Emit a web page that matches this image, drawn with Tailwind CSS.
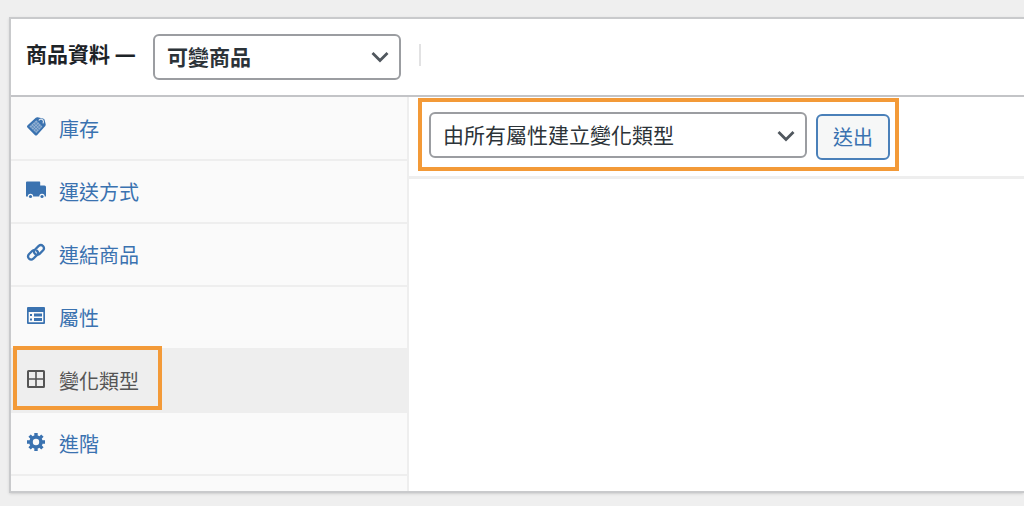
<!DOCTYPE html>
<html lang="zh-Hant">
<head>
    <meta charset="UTF-8">
    <meta name="viewport" content="width=device-width, initial-scale=1.0">
    <script src="https://cdn.jsdelivr.net/npm/@tailwindcss/browser@4"></script>
    <title>商品資料</title>
</head>
<body class="bg-[#efefef] min-h-screen pt-[17px] pl-[9px] overflow-x-hidden font-['Noto_Sans_CJK_TC',sans-serif] text-[#2c3338]">

    <section class="bg-white border-2 border-r-0 border-[#c9cacc] shadow-sm">
        <!-- Product type -->
        <header class="flex items-center h-[78px] pl-[15px] border-b-2 border-[#c3c4c7]">
            <label for="product-type" class="w-[127px] shrink-0 pb-2 text-[21px] leading-6 font-bold text-[#1d2327]">商品資料 <span class="font-['Open_Sans',sans-serif]">—</span></label>
            <div class="relative w-[248px]">
                <select id="product-type" class="appearance-none block w-full h-[46px] pl-3 pr-10 bg-white border-2 border-[#9b9da1] rounded-md text-[21px] font-bold">
                    <option>可變商品</option>
                </select>
                <svg class="absolute right-3 top-[17px] w-[18px] h-3 pointer-events-none" viewBox="0 0 18 12" fill="none" stroke="#50575e" stroke-width="2.8"><path d="M1.5 2 9 9.5 16.5 2"/></svg>
            </div>
            <span class="ml-[18px] w-[2px] h-[22px] -mt-1 bg-[#e2e2e3]"></span>
        </header>

        <div class="flex">
            <!-- Tabs -->
            <nav class="w-[398px] shrink-0 bg-[#fafafa] border-r-2 border-[#eeeeee] pt-px pb-[15px]">
                <ul class="text-xl text-[#3a72b0]">
                    <li>
                        <a href="#inventory" class="flex items-center gap-[13px] h-[63px] pl-[15px] border-b-2 border-[#eeeeee]">
                            <svg class="w-5 h-5 -mt-1" viewBox="0 0 20 20">
                                <path d="M1.600 8.200 9.800.8q.8-.7 1.800-.5l5.400 1.100q1.100.2 1.500 1.200l1.200 4.700q.2.900-.4 1.600L11.200 18q-1.200 1.200-2.400 0L1.400 10.600q-1.100-1.200.2-2.400Z" fill="currentColor"/>
                                <path d="M10.300 3.300 16.400 9.400 10.300 16 3.400 9.500Z" fill="#fafafa" fill-opacity=".45"/>
                                <path d="m8.500 5 6.200 6.300M6.700 6.600l6.200 6.300M5 8.200l6.200 6.300M5.100 11.200l6.900-6.400M7 13l6.800-6.600M8.800 14.600l6.700-6.600" stroke="currentColor" stroke-opacity=".75" stroke-width=".7" fill="none"/>
                                <path d="M12.800 3.600q.8-1.700 2.500-1.500 2.100.4 2.200 2.500 0 1.100-.7 1.800" stroke="#fafafa" stroke-opacity=".85" stroke-width="1.100" fill="none"/>
                            </svg>
                            <span>庫存</span>
                        </a>
                    </li>
                    <li>
                        <a href="#shipping" class="flex items-center gap-[13px] h-[63px] pl-[15px] border-b-2 border-[#eeeeee]">
                            <svg class="w-5 h-5 -mt-1" viewBox="0 0 20 20" fill="currentColor">
                                <path d="M1 1.500h12.500q.7 0 .7.700V5.500h4.300q1.500 0 1.500 1.500V16.500h-1.300a2.700 2.700 0 0 0-5.400 0H7.200a2.700 2.700 0 0 0-5.400 0H0V2.500q0-1 1-1Z"/>
                                <circle cx="4.500" cy="16.500" r="1.600"/>
                                <circle cx="16" cy="16.500" r="1.600"/>
                            </svg>
                            <span>運送方式</span>
                        </a>
                    </li>
                    <li>
                        <a href="#linked" class="flex items-center gap-[13px] h-[63px] pl-[15px] border-b-2 border-[#eeeeee]">
                            <svg class="w-5 h-5 -mt-1" viewBox="0 0 20 20" fill="none" stroke="currentColor" stroke-width="2.300" stroke-linecap="round">
                                <path d="M9.100 10.900q-2.200-2-.2-4.200L12.700 2.900q2.200-1.800 4.300.1 1.900 2.100.1 4.300L13.600 10.800q-.8.700-1.700.7"/>
                                <path d="M10.900 7.700q2.200 2 .2 4.200L7.300 15.700q-2.200 1.800-4.300-.1-1.900-2.100-.1-4.300L6.400 7.800q.8-.7 1.700-.7"/>
                            </svg>
                            <span>連結商品</span>
                        </a>
                    </li>
                    <li>
                        <a href="#attributes" class="flex items-center gap-[13px] h-[63px] pl-[15px] border-b-2 border-[#eeeeee]">
                            <svg class="w-5 h-5 -mt-1" viewBox="0 0 20 20" fill="currentColor">
                                <path fill-rule="evenodd" d="M2 1h16q1 0 1 1v15q0 1-1 1H2q-1 0-1-1V2q0-1 1-1Zm.7 5v10.300h14.600V6Z"/>
                                <path d="M4 8h2v2H4ZM4 12.500h2v2H4ZM8 7.500h8v3H8ZM8 12h8v3H8Z"/>
                            </svg>
                            <span>屬性</span>
                        </a>
                    </li>
                    <li class="relative bg-[#eeeeee] text-[#555555]">
                        <a href="#variations" aria-current="page" class="flex items-center gap-[13px] h-[63px] pl-[15px] border-b-2 border-[#eeeeee]">
                            <svg class="w-5 h-5 -mt-1" viewBox="0 0 20 20" fill="none" stroke="currentColor">
                                <rect x="2" y="2" width="16" height="16" rx=".5" stroke-width="2"/>
                                <path d="M10 2v16M2 10h16" stroke-width="1.600"/>
                            </svg>
                            <span>變化類型</span>
                        </a>
                        <span class="absolute left-[2px] -top-1 w-[149px] h-16 border-4 border-[#f39a38] pointer-events-none"></span>
                    </li>
                    <li>
                        <a href="#advanced" class="flex items-center gap-[13px] h-[63px] pl-[15px] border-b-2 border-[#eeeeee]">
                            <svg class="w-5 h-5 -mt-1" viewBox="0 0 20 20">
                                <circle cx="10" cy="10" r="5" fill="none" stroke="currentColor" stroke-width="3.600"/>
                                <path d="M10 1v3.500M10 15.500V19M1 10h3.500M15.500 10H19M3.600 3.600l2.500 2.500M13.900 13.900l2.500 2.500M3.600 16.400l2.500-2.500M13.900 6.100l2.500-2.500" stroke="currentColor" stroke-width="3.400"/>
                            </svg>
                            <span>進階</span>
                        </a>
                    </li>
                </ul>
            </nav>

            <!-- Variations panel -->
            <main class="flex-1">
                <div class="h-[82px] pl-[9px] pt-px border-b-3 border-[#eeeeee]">
                    <form class="flex items-start gap-[9px] w-[481px] h-[73px] pl-[7px] pr-[5px] pt-[10px] border-4 border-[#f39a38]">
                        <div class="relative flex-1">
                            <select id="bulk-action" aria-label="變化類型操作" class="appearance-none block w-full h-[46px] pl-3 pr-10 bg-white border-2 border-[#9b9da1] rounded-md text-[21px]">
                                <option>由所有屬性建立變化類型</option>
                            </select>
                            <svg class="absolute right-3 top-[18px] w-[18px] h-3 pointer-events-none" viewBox="0 0 18 12" fill="none" stroke="#50575e" stroke-width="2.8"><path d="M1.5 2 9 9.500 16.500 2"/></svg>
                        </div>
                        <button type="button" class="w-[74px] h-[46px] mt-[2px] bg-[#f6f7f7] border-2 border-[#4a80b9] rounded-md text-xl text-[#3a72b0]">送出</button>
                    </form>
                </div>
            </main>
        </div>
    </section>

</body>
</html>
